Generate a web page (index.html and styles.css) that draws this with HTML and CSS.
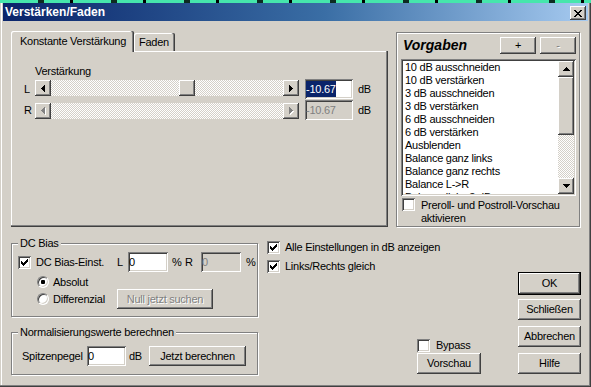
FILE: index.html
```html
<!DOCTYPE html>
<html lang="de">
<head>
<meta charset="utf-8">
<title>Verstärken/Faden</title>
<link rel="stylesheet" href="styles.css">
</head>
<body>
<div class="win">
  <div class="titlebar">
    <span class="title">Verstärken/Faden</span>
    <span class="close raised"><svg width="8" height="7" viewBox="0 0 8 7"><path d="M0 0h2v1H0zM6 0h2v1H6zM1 1h2v1H1zM5 1h2v1H5zM2 2h4v1H2zM3 3h2v1H3zM2 4h4v1H2zM1 5h2v1H1zM5 5h2v1H5zM0 6h2v1H0zM6 6h2v1H6z"/></svg></span>
  </div>
  <div class="client">
    <div class="top">
      <div class="tabs">
        <div class="tabstrip">
          <div class="tab tab-active">Konstante Verstärkung</div>
          <div class="tab tab-faden">Faden</div>
        </div>
        <div class="panel">
          <div class="caption">Verstärkung</div>
          <div class="srow srow-l">
            <span class="chan">L</span>
            <div class="hscroll">
              <span class="sbtn"><svg width="4" height="7" viewBox="0 0 4 7"><path d="M0 3h1v1H0zM1 2h1v3H1zM2 1h1v5H2zM3 0h1v7H3z"/></svg></span>
              <span class="track"><span class="thumb" style="margin-left:128px"></span></span>
              <span class="sbtn"><svg width="4" height="7" viewBox="0 0 4 7"><path d="M3 3h1v1H3zM2 2h1v3H2zM1 1h1v5H1zM0 0h1v7H0z"/></svg></span>
            </div>
            <span class="edit edit-db"><span class="hl">-10.67</span></span>
            <span class="unit">dB</span>
          </div>
          <div class="srow srow-r">
            <span class="chan">R</span>
            <div class="hscroll">
              <span class="sbtn"><svg width="5" height="8" viewBox="0 0 5 8"><path fill="#fff" d="M1 4h1v1H1zM2 3h1v3H2zM3 2h1v5H3zM4 1h1v7H4z"/><path fill="#808080" d="M0 3h1v1H0zM1 2h1v3H1zM2 1h1v5H2zM3 0h1v7H3z"/></svg></span>
              <span class="track"></span>
              <span class="sbtn"><svg width="5" height="8" viewBox="0 0 5 8"><path fill="#fff" d="M4 4h1v1H4zM3 3h1v3H3zM2 2h1v5H2zM1 1h1v7H1z"/><path fill="#808080" d="M3 3h1v1H3zM2 2h1v3H2zM1 1h1v5H1zM0 0h1v7H0z"/></svg></span>
            </div>
            <span class="edit edit-db disabled">-10.67</span>
            <span class="unit">dB</span>
          </div>
        </div>
      </div>
      <div class="presets">
        <div class="presets-head">
          <span class="presets-title">Vorgaben</span>
          <span class="btn btn-small">+</span>
          <span class="btn btn-small disabled">-</span>
        </div>
        <div class="listbox">
          <ul class="items">
            <li>10 dB ausschneiden</li>
            <li>10 dB verstärken</li>
            <li>3 dB ausschneiden</li>
            <li>3 dB verstärken</li>
            <li>6 dB ausschneiden</li>
            <li>6 dB verstärken</li>
            <li>Ausblenden</li>
            <li>Balance ganz links</li>
            <li>Balance ganz rechts</li>
            <li>Balance L-&gt;R</li>
            <li>Balance links 3 dB</li>
          </ul>
          <div class="vscroll">
            <span class="sbtn"><svg width="7" height="4" viewBox="0 0 7 4"><path d="M3 0h1v1H3zM2 1h3v1H2zM1 2h5v1H1zM0 3h7v1H0z"/></svg></span>
            <span class="vtrack"><span class="vthumb"></span></span>
            <span class="sbtn"><svg width="7" height="4" viewBox="0 0 7 4"><path d="M0 0h7v1H0zM1 1h5v1H1zM2 2h3v1H2zM3 3h1v1H3z"/></svg></span>
          </div>
        </div>
        <div class="check check-multi">
          <span class="cbox"></span>
          <span class="check-text">Preroll- und Postroll-Vorschau<br>aktivieren</span>
        </div>
      </div>
    </div>

    <div class="bottom">
      <div class="leftcol">
        <div class="group group-dc">
          <span class="group-label">DC Bias</span>
          <div class="dc-row">
            <span class="cbox checked"><svg width="7" height="7" viewBox="0 0 7 7"><path d="M6 0h1v1H6zM5 1h2v1H5zM0 2h1v1H0zM4 2h3v1H4zM0 3h2v1H0zM3 3h3v1H3zM0 4h5v1H0zM1 5h3v1H1zM2 6h1v1H2z"/></svg></span>
            <span class="dc-label">DC Bias-Einst.</span>
            <span class="dc-ch">L</span>
            <span class="edit edit-pct">0</span>
            <span class="pct pct-l">%</span>
            <span class="dc-ch dc-ch-r">R</span>
            <span class="edit edit-pct disabled">0</span>
            <span class="pct pct-r">%</span>
          </div>
          <div class="radio-row">
            <span class="radio on"></span>
            <span class="radio-text">Absolut</span>
          </div>
          <div class="radio-row radio-row-btn">
            <span class="radio"></span>
            <span class="radio-text radio-text-w">Differenzial</span>
            <span class="btn btn-null disabled">Null jetzt suchen</span>
          </div>
        </div>
        <div class="group group-norm">
          <span class="group-label">Normalisierungswerte berechnen</span>
          <div class="norm-row">
            <span class="norm-label">Spitzenpegel</span>
            <span class="edit edit-peak">0</span>
            <span class="norm-unit">dB</span>
            <span class="btn btn-calc">Jetzt berechnen</span>
          </div>
        </div>
      </div>

      <div class="midcol">
        <div class="check">
          <span class="cbox checked"><svg width="7" height="7" viewBox="0 0 7 7"><path d="M6 0h1v1H6zM5 1h2v1H5zM0 2h1v1H0zM4 2h3v1H4zM0 3h2v1H0zM3 3h3v1H3zM0 4h5v1H0zM1 5h3v1H1zM2 6h1v1H2z"/></svg></span>
          <span class="check-text">Alle Einstellungen in dB anzeigen</span>
        </div>
        <div class="check check-second">
          <span class="cbox checked"><svg width="7" height="7" viewBox="0 0 7 7"><path d="M6 0h1v1H6zM5 1h2v1H5zM0 2h1v1H0zM4 2h3v1H4zM0 3h2v1H0zM3 3h3v1H3zM0 4h5v1H0zM1 5h3v1H1zM2 6h1v1H2z"/></svg></span>
          <span class="check-text">Links/Rechts gleich</span>
        </div>
      </div>

      <div class="bypasscol">
        <div class="check">
          <span class="cbox"></span>
          <span class="check-text bypass-text">Bypass</span>
        </div>
        <span class="btn btn-preview">Vorschau</span>
      </div>

      <div class="btncol">
        <span class="btn btn-main btn-default">OK</span>
        <span class="btn btn-main btn-close">Schließen</span>
        <span class="btn btn-main btn-gap">Abbrechen</span>
        <span class="btn btn-main btn-gap">Hilfe</span>
      </div>
    </div>
  </div>
</div>
</body>
</html>
```

FILE: styles.css
```css
* { box-sizing: border-box; }
html, body { margin: 0; padding: 0; }
body {
  width: 591px;
  height: 387px;
  overflow: hidden;
  background: repeating-linear-gradient(90deg, #46e6ac 0 38px, #0d2b21 38px 44px, #46e6ac 44px 70px, #000 70px 73px);
  font: 11px/13px "Liberation Sans", Arial, sans-serif;
  letter-spacing: -0.25px;
  color: #000;
}

/* window frame */
.win {
  margin-top: 3px;
  width: 591px;
  height: 384px;
  padding: 0 3px 3px 3px;
  background: #d4d0c8;
  box-shadow: inset -1px -1px #404040, inset -2px -2px #808080, inset 1px 0 #d4d0c8, inset 2px 0 #fff;
}
.titlebar {
  height: 18px;
  display: flex;
  align-items: flex-start;
  background: linear-gradient(90deg, #0a246a 0%, #3a6ea5 55%, #a6caf0 100%);
  color: #fff;
}
.title {
  flex: 1;
  padding-left: 2px;
  font: bold 12px/18px "Liberation Sans", Arial, sans-serif;
  letter-spacing: 0;
}
.close {
  width: 16px;
  height: 14px;
  margin: 3px 2px 0 0;
  display: flex;
  align-items: center;
  justify-content: center;
  background: #d4d0c8;
}
.raised, .sbtn, .thumb, .vthumb, .btn {
  box-shadow: inset -1px -1px #404040, inset 1px 1px #fff, inset -2px -2px #808080;
}

.client { padding: 10px 0 0 8px; }

/* top area */
.top { display: flex; height: 196px; }
.tabs { width: 377px; display: flex; flex-direction: column; }
.tabstrip { height: 20px; display: flex; align-items: flex-end; }
.tab {
  height: 18px;
  line-height: 19px;
  background: #d4d0c8;
  white-space: nowrap;
  border-top-left-radius: 2px;
  border-top-right-radius: 2px;
  box-shadow: inset -1px 0 #404040, inset -2px 0 #808080, inset 1px 1px #fff;
}
.tab-active {
  position: relative;
  z-index: 1;
  width: 123px;
  height: 21px;
  line-height: 21px;
  margin-bottom: -1px;
  padding-left: 9px;
}
.tab-faden { width: 41px; padding-left: 5px; }
.panel {
  height: 176px;
  padding-top: 14px;
  box-shadow: inset -1px -1px #404040, inset -2px -2px #808080, inset 1px 1px #fff;
}
.caption { margin-left: 24px; }
.srow { display: flex; align-items: flex-start; height: 20px; margin-top: 1px; }
.chan { width: 11px; margin-left: 13px; line-height: 20px; flex-shrink: 0; }
.hscroll { display: flex; width: 264px; height: 16px; margin-top: 1px; flex-shrink: 0; }
.srow-r .hscroll { margin-top: 3px; }
.sbtn {
  width: 16px;
  height: 16px;
  flex-shrink: 0;
  display: flex;
  align-items: center;
  justify-content: center;
  background: #d4d0c8;
}
.track {
  flex: 1;
  display: flex;
  background: repeating-conic-gradient(#d4d0c8 0 25%, #fff 0 50%) 0 0 / 2px 2px;
}
.thumb { width: 16px; height: 16px; background: #d4d0c8; }

.edit {
  display: block;
  height: 20px;
  padding: 2px 1px;
  line-height: 16px;
  background: #fff;
  flex-shrink: 0;
  white-space: nowrap;
  overflow: hidden;
  box-shadow: inset 1px 1px #808080, inset -1px -1px #fff, inset 2px 2px #404040, inset -2px -2px #d4d0c8;
}
.edit.disabled { background: #d4d0c8; color: #808080; }
.edit-db { width: 48px; margin-left: 6px; padding-left: 1px; }
.hl { display: inline-block; background: #0a246a; color: #fff; line-height: 16px; }
.unit { margin-left: 5px; line-height: 20px; }

/* presets */
.presets {
  width: 184px;
  height: 195px;
  margin: 1px 0 0 8px;
  padding: 4px 3px 0 4px;
  border: 1px solid #808080;
  box-shadow: inset 1px 1px #fff, 1px 1px #fff;
}
.presets-head { display: flex; height: 17px; }
.presets-title {
  flex: 1;
  margin-left: 2px;
  font: italic bold 14px/17px "Liberation Sans", Arial, sans-serif;
  letter-spacing: 0;
}
.btn {
  display: flex;
  align-items: center;
  justify-content: center;
  background: #d4d0c8;
  white-space: nowrap;
  flex-shrink: 0;
}
.btn.disabled { color: #808080; text-shadow: 1px 1px #fff; }
.btn-small { width: 36px; height: 17px; margin-left: 4px; }
.listbox {
  display: flex;
  height: 137px;
  margin-top: 5px;
  padding: 2px;
  background: #fff;
  box-shadow: inset 1px 1px #808080, inset -1px -1px #fff, inset 2px 2px #404040, inset -2px -2px #d4d0c8;
}
.items {
  flex: 1;
  margin: 0;
  padding: 0 0 0 2px;
  list-style: none;
  overflow: hidden;
  white-space: nowrap;
}
.vscroll { width: 16px; display: flex; flex-direction: column; }
.vtrack {
  flex: 1;
  background: repeating-conic-gradient(#d4d0c8 0 25%, #fff 0 50%) 0 0 / 2px 2px;
}
.vthumb { display: block; width: 16px; height: 58px; background: #d4d0c8; }

/* checkboxes */
.check { display: flex; align-items: center; height: 13px; white-space: nowrap; }
.cbox {
  width: 13px;
  height: 13px;
  flex-shrink: 0;
  display: flex;
  align-items: center;
  justify-content: center;
  background: #fff;
  box-shadow: inset 1px 1px #808080, inset -1px -1px #fff, inset 2px 2px #404040, inset -2px -2px #d4d0c8;
}
.check-text { margin-left: 5px; }
.check-multi {
  height: auto;
  align-items: flex-start;
  margin: 2px 0 0 1px;
}
.check-multi .check-text { margin: 1px 0 0 6px; }

/* bottom area */
.bottom {
  display: grid;
  grid-template-columns: 247px 159px 64px 100px;
  align-items: start;
}
.group {
  position: relative;
  border: 1px solid #808080;
  box-shadow: inset 1px 1px #fff, 1px 1px #fff;
  padding: 0 6px;
}
.group-label {
  position: absolute;
  top: -7px;
  left: 6px;
  padding: 0 2px;
  background: #d4d0c8;
  white-space: nowrap;
}
.group-dc { margin-top: 16px; padding-top: 8px; padding-bottom: 7px; }
.group-norm { margin-top: 15px; padding-top: 13px; padding-bottom: 8px; }

.dc-row { display: flex; align-items: center; height: 20px; white-space: nowrap; }
.dc-row > * { flex-shrink: 0; }
.dc-label { width: 81px; margin-left: 5px; }
.dc-ch { width: 11px; }
.dc-ch-r { width: 16px; }
.edit-pct { width: 40px; }
.pct-l { width: 13px; margin-left: 4px; }
.pct-r { margin-left: 5px; }

.radio-row { display: flex; align-items: center; height: 12px; margin-top: 4px; }
.radio-row-btn { height: 20px; margin-top: 1px; }
.radio {
  position: relative;
  width: 12px;
  height: 12px;
  margin-left: 19px;
  flex-shrink: 0;
  border-radius: 50%;
  background: #fff;
  border: 1px solid;
  border-color: #808080 #fff #fff #808080;
  box-shadow: inset 1px 1px #404040, inset -1px -1px #d4d0c8;
}
.radio.on::after {
  content: "";
  position: absolute;
  left: 3px;
  top: 3px;
  width: 4px;
  height: 4px;
  border-radius: 1px;
  background: #000;
}
.radio-text { margin-left: 4px; white-space: nowrap; }
.radio-text-w { width: 64px; flex-shrink: 0; }
.btn-null { width: 96px; height: 20px; }

.norm-row { display: flex; align-items: center; height: 20px; white-space: nowrap; }
.norm-row > * { flex-shrink: 0; }
.norm-label { width: 65px; margin-left: 4px; }
.edit-peak { width: 39px; }
.norm-unit { width: 20px; margin-left: 3px; }
.btn-calc { width: 97px; height: 20px; }

.midcol { padding-left: 9px; margin-top: 14px; }
.check-second { margin-top: 6px; }

.bypasscol { margin-top: 112px; }
.bypass-text { margin-left: 6px; }
.btn-preview { width: 64px; height: 21px; margin-top: 1px; }

.btncol { display: flex; flex-direction: column; align-items: flex-end; }
.btn-main { width: 63px; height: 21px; }
.btn-default { height: 23px; margin-top: 45px; border: 1px solid #000; }
.btn-close { margin-top: 4px; }
.btn-gap { margin-top: 6px; }
```
